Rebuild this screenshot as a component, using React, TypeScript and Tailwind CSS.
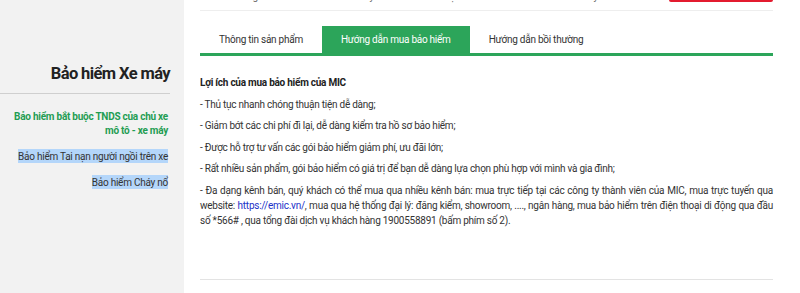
import React from 'react';

const font = { fontFamily: 'Roboto, "Liberation Sans", sans-serif' };

const sideLinks = [
    { label: 'Bảo hiểm bắt buộc TNDS của chủ xe mô tô - xe máy', active: true },
    { label: 'Bảo hiểm Tai nạn người ngồi trên xe', selected: true },
    { label: 'Bảo hiểm Cháy nổ', selected: true },
];

const tabs = ['Thông tin sản phẩm', 'Hướng dẫn mua bảo hiểm', 'Hướng dẫn bồi thường'];

const bullets = [
    '- Thủ tục nhanh chóng thuận tiện dễ dàng;',
    '- Giảm bớt các chi phí đi lại, dễ dàng kiểm tra hồ sơ bảo hiểm;',
    '- Được hỗ trợ tư vấn các gói bảo hiểm giảm phí, ưu đãi lớn;',
    '- Rất nhiều sản phẩm, gói bảo hiểm có giá trị để bạn dễ dàng lựa chọn phù hợp với mình và gia đình;',
];

export default function App() {
    return (
        <div className="flex w-[800px] h-[293px] overflow-hidden bg-white text-[#333] tracking-[-0.25px]" style={font}>
            <aside className="w-[184px] shrink-0 bg-[#f2f2f2] pt-[59px] pr-[14px]">
                <h2 className="text-right text-[16.5px] tracking-[-0.6px] leading-[30px] font-bold text-[#222] pb-[4px] border-b border-[#cfcfcf]">
                    Bảo hiểm Xe máy
                </h2>
                <ul className="mt-[16px] flex flex-col items-end gap-[11.5px] pr-[2px] text-[10px] leading-[14px] text-right">
                    {sideLinks.map((l, i) => (
                        <li key={i} className={l.active ? 'font-bold text-[#1f9d52]' : 'text-[#333]'}>
                            <span className={l.selected ? 'bg-[#b4d6fa] py-[1.5px]' : ''}>{l.label}</span>
                        </li>
                    ))}
                </ul>
            </aside>

            <main className="ml-[16px] w-[573px]">
                <div className="h-[11px] border-b border-[#eeeeee] flex justify-between items-start overflow-hidden">
                    <span className="-mt-[9px] text-[10px] leading-[12px] text-[#666]">
                        ›› Khách hàng cá nhân › Bảo hiểm Xe máy › Bảo hiểm bắt buộc TNDS của chủ xe mô tô - xe máy
                    </span>
                    <span className="-mt-[28px] w-[104px] h-[30px] bg-[#e31b2f] rounded-[2px]" />
                </div>

                <div className="mt-[15px] flex border-b-[3px] border-[#2ca55a] text-[10px] leading-[27px]">
                    {tabs.map((t, i) => (
                        <div key={t} className={i === 1 ? 'px-[19px] bg-[#2ca55a] text-white' : 'px-[19px] text-[#333]'}>
                            {t}
                        </div>
                    ))}
                </div>

                <div className="pt-[19px] text-[10px] leading-[15px] text-[#333] border-b border-[#e3e3e3] h-[224px]">
                    <p className="font-bold text-[#222] mb-[6.5px]">Lợi ích của mua bảo hiểm của MIC</p>
                    {bullets.map(b => (
                        <p key={b} className="mb-[6.5px]">{b}</p>
                    ))}
                    <p className="text-justify">
                        - Đa dạng kênh bán, quý khách có thể mua qua nhiều kênh bán: mua trực tiếp tại các công ty thành viên của MIC, mua trực tuyến qua website:{' '}
                        <a className="text-[#2130c8]">https://emic.vn/</a>, mua qua hệ thống đại lý: đăng kiểm, showroom, ...., ngân hàng, mua bảo hiểm trên điện thoại di động qua đầu số *566# , qua tổng đài dịch vụ khách hàng 1900558891 (bấm phím số 2).
                    </p>
                </div>
            </main>
        </div>
    );
}
